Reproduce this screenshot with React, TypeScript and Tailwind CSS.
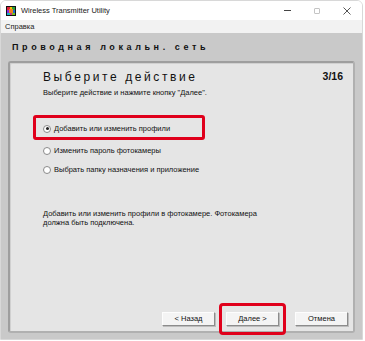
import React from "react";

function AppIcon() {
  return (
    <svg width="10" height="10" viewBox="0 0 10 10" className="shrink-0">
      <rect x="0" y="0" width="10" height="10" fill="#111" />
      <rect x="1" y="1" width="3" height="3" fill="#e0203a" />
      <rect x="4" y="1" width="2" height="2" fill="#f5c400" />
      <rect x="6" y="1" width="3" height="3" fill="#2a9d3a" />
      <rect x="1" y="4" width="2" height="3" fill="#8a2be2" />
      <rect x="3" y="3" width="4" height="4" fill="#f08020" />
      <rect x="7" y="4" width="2" height="3" fill="#1f6fd0" />
      <rect x="1" y="7" width="3" height="2" fill="#19b5c8" />
      <rect x="4" y="7" width="2" height="2" fill="#d0308a" />
      <rect x="6" y="7" width="3" height="2" fill="#7cc020" />
    </svg>
  );
}

function Radio({ label, checked }: { label: string; checked?: boolean }) {
  return (
    <div className="flex items-center h-[12px] gap-[3px]">
      <span className="w-[8px] h-[8px] rounded-full border border-[#8a8a8a] bg-white flex items-center justify-center shrink-0">
        {checked && <span className="w-[3px] h-[3px] rounded-full bg-[#222]" />}
      </span>
      <span className="text-[7.5px] leading-[12px] text-[#111]">{label}</span>
    </div>
  );
}

function WinButton({ label }: { label: string }) {
  return (
    <div className="w-[53px] h-[14px] flex items-center justify-center bg-[#f4f4f4] border border-[#fdfdfd] border-r-[#8c8c8c] border-b-[#8c8c8c] shadow-[1px_1px_0_#bdbdbd] text-[7.5px] text-[#111]">
      {label}
    </div>
  );
}

export default function App() {
  return (
    <div className="w-[365px] h-[341px] bg-white" style={{ fontFamily: '"Liberation Sans", Arial, sans-serif' }}>
      <div className="w-[363px] h-[340px] flex flex-col border border-[#d8d8d8] rounded-t-[6px] overflow-hidden">
        {/* title bar */}
        <div className="h-[19px] bg-white flex items-center pl-[5px] shrink-0">
          <AppIcon />
          <span className="ml-[5px] text-[7.5px] text-[#222]">Wireless Transmitter Utility</span>
          <div className="ml-auto flex items-center h-full text-[#444]">
            <span className="w-[30px] flex justify-center">
              <span className="w-[7px] h-px bg-[#444]" />
            </span>
            <span className="w-[30px] flex justify-center">
              <span className="w-[6px] h-[6px] border border-[#c4c4c4] rounded-[1px]" />
            </span>
            <span className="w-[30px] flex justify-center">
              <svg width="8" height="8" viewBox="0 0 8 8">
                <path d="M0.5 0.5 L7.5 7.5 M7.5 0.5 L0.5 7.5" stroke="#444" strokeWidth="0.9" />
              </svg>
            </span>
          </div>
        </div>
        {/* menu */}
        <div className="h-[13px] bg-[#f2f2f2] flex items-center pl-[4px] shrink-0">
          <span className="text-[7.5px] text-[#222]">Справка</span>
        </div>
        {/* body */}
        <div className="flex-1 bg-[#c9c9c9] flex flex-col px-[7px] pb-[6px]">
          <div className="h-[28px] flex items-center pl-[4px] pt-[1px] text-[9px] font-bold tracking-[3.6px] text-[#111]">
            Проводная локальн. сеть
          </div>
          <div className="flex-1 bg-[#e5e5e5] rounded-[3px] border-[2px] border-[#b0b0b0] border-t-[#9e9e9e] border-l-[#9e9e9e] shadow-[inset_1px_1px_0_#d0d0d0] flex flex-col pl-[33px] pr-[5px]">
            <div className="flex items-center justify-between h-[18px] mt-[5px] pr-[5px]">
              <span className="text-[12px] tracking-[2.6px] text-[#111]">Выберите действие</span>
              <span className="text-[10.5px] font-bold text-[#111]">3/16</span>
            </div>
            <div className="text-[7.5px] leading-[10px] mt-[2px] text-[#111]">
              Выберите действие и нажмите кнопку "Далее".
            </div>
            <div className="mt-[17px] flex flex-col">
              <div className="-ml-[10px] w-[172px] h-[25px] border-[3px] border-[#e0001b] rounded-[3px] flex items-center pl-[7px] pt-[2px]">
                <Radio label="Добавить или изменить профили" checked />
              </div>
              <div className="mt-[5px]">
                <Radio label="Изменить пароль фотокамеры" />
              </div>
              <div className="mt-[7px]">
                <Radio label="Выбрать папку назначения и приложение" />
              </div>
            </div>
            <div className="mt-[33px] text-[7.5px] leading-[9px] text-[#111] w-[215px]">
              Добавить или изменить профили в фотокамере. Фотокамера должна быть подключена.
            </div>
            <div className="mt-auto flex items-center justify-end gap-[4px] mb-[-4px]">
              <WinButton label="< Назад" />
              <div className="border-[3px] border-[#e0001b] rounded-[4px] px-[4px] py-[6px] mr-[5px]">
                <WinButton label="Далее >" />
              </div>
              <WinButton label="Отмена" />
            </div>
          </div>
        </div>
      </div>
    </div>
  );
}
